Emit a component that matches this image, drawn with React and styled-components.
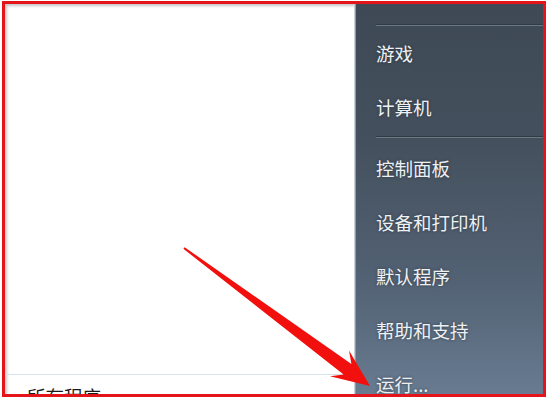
import styled, { createGlobalStyle } from 'styled-components';

const GlobalStyle = createGlobalStyle`
  html, body {
    margin: 0;
    padding: 0;
    background: #ffffff;
  }
`;

const topItems = ['游戏', '计算机'];
const bottomItems = ['控制面板', '设备和打印机', '默认程序', '帮助和支持', '运行...'];

const Arrow = () => (
  <ArrowLayer viewBox="0 0 550 400" width="550" height="400">
    <polygon
      points="184.6,247.2 351.4,364.1 349,350.5 370,386 330,376.2 343.6,374.5 183.4,248.8"
      fill="#f2100f"
    />
  </ArrowLayer>
);

const App = () => {
  return (
    <Page>
      <GlobalStyle />
      <Frame>
        <LeftPanel>
          <Spacer />
          <LeftDivider />
          <AllPrograms>
            <AllProgramsText>所有程序</AllProgramsText>
          </AllPrograms>
        </LeftPanel>
        <RightPanel>
          <Separator $top={20} />
          {topItems.map((t) => (
            <MenuItem key={t}>{t}</MenuItem>
          ))}
          <Separator $top={2} $bottom={3} />
          {bottomItems.map((t) => (
            <MenuItem key={t}>{t}</MenuItem>
          ))}
        </RightPanel>
      </Frame>
      <Arrow />
    </Page>
  );
};

export default App;

const Page = styled.div`
  position: relative;
  width: 550px;
  height: 400px;
  overflow: hidden;
  padding: 1px 0 0 2px;
  box-sizing: border-box;
  font-family: "Noto Sans CJK SC", "Noto Sans", sans-serif;
`;

const Frame = styled.div`
  width: 544px;
  height: 396px;
  box-sizing: border-box;
  border: 3px solid #e3151b;
  display: flex;
  overflow: hidden;
`;

const LeftPanel = styled.div`
  width: 349px;
  flex-shrink: 0;
  display: flex;
  flex-direction: column;
  background: #ffffff;
  box-shadow: inset 3px 3px 3px -1px rgba(90, 90, 90, 0.35);
`;

const Spacer = styled.div`
  flex: 1;
`;

const LeftDivider = styled.div`
  height: 1px;
  background: #d6e2ec;
`;

const AllPrograms = styled.div`
  height: 19px;
  padding-left: 22px;
  overflow: hidden;
`;

const AllProgramsText = styled.span`
  display: block;
  margin-top: 10px;
  font-size: 18.5px;
  line-height: 22px;
  color: #1a1a1a;
`;

const RightPanel = styled.div`
  flex: 1;
  display: flex;
  flex-direction: column;
  border-left: 1px solid #c9d0d6;
  box-shadow: inset 1px 0 0 #8d99a5;
  background: linear-gradient(180deg, #3e4955 0%, #44505d 35%, #526173 70%, #687b90 100%);
`;

const Separator = styled.div`
  margin: ${(p) => p.$top || 0}px 0 ${(p) => p.$bottom || 0}px 21px;
  height: 1px;
  border-top: 1px solid #313b45;
  background: #6b7783;
  flex-shrink: 0;
`;

const MenuItem = styled.div`
  height: 54px;
  flex-shrink: 0;
  display: flex;
  align-items: center;
  padding-left: 21px;
  font-size: 18.5px;
  color: #eef1f4;
  text-shadow: 0 0 3px rgba(20, 28, 36, 0.6);
  white-space: nowrap;
`;

const ArrowLayer = styled.svg`
  position: absolute;
  left: 0;
  top: 0;
  pointer-events: none;
`;
